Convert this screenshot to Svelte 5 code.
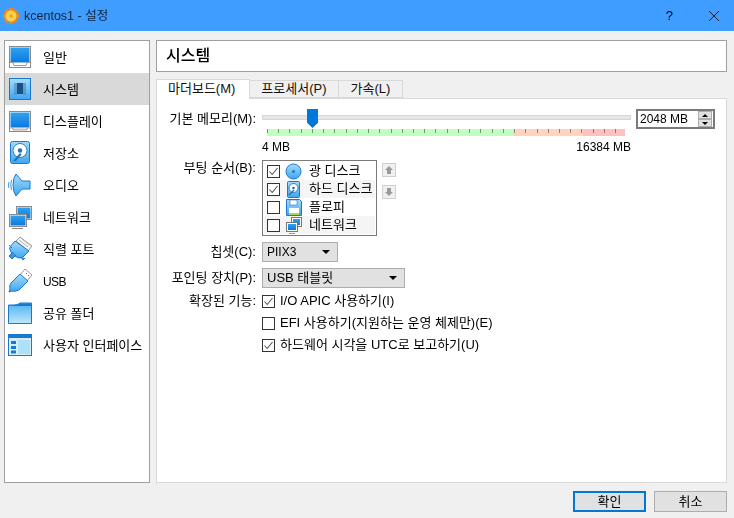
<script>
  const pages = [
    { id: "general", label: "일반" },
    { id: "system", label: "시스템" },
    { id: "display", label: "디스플레이" },
    { id: "storage", label: "저장소" },
    { id: "audio", label: "오디오" },
    { id: "network", label: "네트워크" },
    { id: "serial", label: "직렬 포트" },
    { id: "usb", label: "USB", latin: true },
    { id: "folder", label: "공유 폴더" },
    { id: "ui", label: "사용자 인터페이스" }
  ];
  const tabs = ["마더보드(M)", "프로세서(P)", "가속(L)"];
  const boot = [
    { id: "optical", label: "광 디스크", on: true },
    { id: "hdd", label: "하드 디스크", on: true },
    { id: "floppy", label: "플로피", on: false },
    { id: "net", label: "네트워크", on: false }
  ];
  const features = [
    { label: "I/O APIC 사용하기(I)", on: true },
    { label: "EFI 사용하기(지원하는 운영 체제만)(E)", on: false },
    { label: "하드웨어 시각을 UTC로 보고하기(U)", on: true }
  ];
</script>

{#snippet check(on)}
  <span class="check">
    {#if on}
      <svg width="11" height="11" viewBox="0 0 11 11"><path d="M1.5 5.5 L4.2 8.5 L9.5 2" fill="none" stroke="#555" stroke-width="1.1" /></svg>
    {/if}
  </span>
{/snippet}

{#snippet icon(id)}
  <svg class="icon" width="26" height="26" viewBox="0 0 26 26">
    {#if id === "general"}
      <rect x="1.500" y="2.500" width="21" height="21" fill="#fff" stroke="#8a8a8a" />
      <rect x="2.500" y="3.500" width="19" height="15" fill="url(#blue)" />
      <path d="M2 18.500h3l1 3h12l1-3h3" fill="none" stroke="#999" />
    {:else if id === "system"}
      <rect x="1.500" y="2.500" width="21" height="21" fill="url(#sky)" stroke="#1b78cf" />
      <rect x="9" y="7" width="6" height="11" fill="#1f4f7e" />
      <path d="M6 8h3M6 10h3M6 12h3M6 14h3M6 16h3M6 18h3M15 8h3M15 10h3M15 12h3M15 14h3M15 16h3M15 18h3" stroke="#3f7fb3" />
    {:else if id === "display"}
      <rect x="1.500" y="3.500" width="21" height="20" fill="#fff" stroke="#8a8a8a" />
      <rect x="2.500" y="4.500" width="19" height="15" fill="url(#blue)" />
      <path d="M2 20h3v2h14v-2h3" fill="#ddd" stroke="#aaa" />
    {:else if id === "storage"}
      <rect x="2.500" y="1.500" width="19" height="22" rx="2" fill="url(#sky)" stroke="#1b78cf" />
      <circle cx="12" cy="10.500" r="7" fill="#fff" stroke="#2a7fc9" />
      <circle cx="12" cy="10.500" r="2.200" fill="#2a6fb0" />
      <path d="M5 21l7-8 1.500 1.500L8 21z" fill="#2a6fb0" />
    {:else if id === "audio"}
      <path d="M14 9h8v8h-8l-6 7q-3-4-3-11t3-11z" fill="url(#sky)" stroke="#1b78cf" />
      <path d="M3.500 8q-1.500 5 0 10M1 10q-1 3 0 6" fill="none" stroke="#3a94e0" />
    {:else if id === "network"}
      <rect x="8.500" y="2.500" width="15" height="13" fill="#fff" stroke="#8a8a8a" />
      <rect x="9.500" y="3.500" width="13" height="11" fill="url(#blue)" />
      <rect x="1.500" y="10.500" width="17" height="12" fill="#fff" stroke="#8a8a8a" />
      <rect x="2.500" y="11.500" width="15" height="10" fill="url(#blue)" />
      <path d="M4 24.500h11" stroke="#888" />
    {:else if id === "serial"}
      <path d="M12 1l12 9-4 5L8 5z" fill="#f2f2f2" stroke="#999" />
      <path d="M11 4l9 7M14 3l8 6" stroke="#bbb" />
      <path d="M7 5l14 10-6 6-3 1q-3 0-5-2l-4-4q-2-3-1-5z" fill="url(#sky)" stroke="#1b78cf" />
      <path d="M5 16l-4 4 3 3 4-4M13 21l2 3 2-2M1 9l3 3" fill="#3a94e0" stroke="#1b78cf" />
    {:else if id === "usb"}
      <path d="M17 1l7 6-5 6-7-6z" fill="#fff" stroke="#999" />
      <path d="M18 5l1 1M20 7l1 1" stroke="#666" />
      <path d="M12 6l8 7-9 9q-4 2-7 1l-3 1 1-3q-1-4 1-6z" fill="url(#sky)" stroke="#1b78cf" />
    {:else if id === "folder"}
      <path d="M0.500 6v-1h9l2-2h12v20.500h-23z" fill="url(#folder)" stroke="#1b78cf" />
      <path d="M1 6h23V3.500H12z" fill="#1b78cf" />
    {:else if id === "ui"}
      <rect x="0.500" y="2.500" width="23" height="21" fill="#d3effc" stroke="#1b78cf" />
      <rect x="1" y="3" width="22" height="3" fill="#1b78cf" />
      <rect x="3" y="9" width="5" height="3" fill="#1b78cf" />
      <rect x="3" y="14" width="5" height="3" fill="#1b78cf" />
      <rect x="3" y="18.500" width="5" height="3" fill="#1b78cf" />
      <rect x="10" y="8" width="12" height="14" fill="#aee0f8" />
    {/if}
  </svg>
{/snippet}

{#snippet bootIcon(id)}
  <svg class="boot-icon" width="17" height="17" viewBox="0 0 17 17">
    {#if id === "optical"}
      <circle cx="8.500" cy="8.500" r="7.500" fill="url(#sky)" stroke="#1b78cf" />
      <circle cx="8.500" cy="8.500" r="1.500" fill="#1b78cf" />
    {:else if id === "hdd"}
      <rect x="2.500" y="0.500" width="12" height="16" rx="1" fill="url(#sky)" stroke="#1b78cf" />
      <circle cx="8.500" cy="7" r="4.500" fill="#fff" stroke="#2a7fc9" />
      <circle cx="8.500" cy="7" r="1.300" fill="#2a6fb0" />
      <path d="M4 14l5-5" stroke="#2a6fb0" stroke-width="1.500" />
    {:else if id === "floppy"}
      <path d="M1.500 0.500h13l2 2v14h-15z" fill="url(#sky)" stroke="#1b78cf" />
      <rect x="5" y="1" width="7" height="5" fill="#fff" stroke="#1b78cf" stroke-width="0.600" />
      <rect x="4" y="9" width="10" height="7" fill="#fff" />
      <rect x="4" y="14" width="10" height="2" fill="#a6d84a" />
    {:else}
      <rect x="6.500" y="0.500" width="10" height="9" fill="#fff" stroke="#777" />
      <rect x="8" y="2" width="7" height="6" fill="url(#blue)" />
      <rect x="1.500" y="5.500" width="11" height="9" fill="#fff" stroke="#777" />
      <rect x="3" y="7" width="8" height="6" fill="url(#blue)" />
      <path d="M4 16.500h6" stroke="#999" />
    {/if}
  </svg>
{/snippet}

<svg class="defs" width="0" height="0" aria-hidden="true">
  <defs>
    <linearGradient id="blue" x1="0" y1="0" x2="0" y2="1">
      <stop offset="0" stop-color="#2fa3ee" />
      <stop offset="1" stop-color="#0c78e0" />
    </linearGradient>
    <linearGradient id="sky" x1="0" y1="0" x2="0" y2="1">
      <stop offset="0" stop-color="#a4dcfa" />
      <stop offset="1" stop-color="#3fa6ef" />
    </linearGradient>
    <linearGradient id="folder" x1="0" y1="0" x2="0" y2="1">
      <stop offset="0" stop-color="#4db1ef" />
      <stop offset="1" stop-color="#bfe8fc" />
    </linearGradient>
  </defs>
</svg>

<div class="window">
  <header class="titlebar">
    <svg class="app-icon" width="16" height="16" viewBox="0 0 16 16">
      <path d="M6 0h4v2l2-1 3 3-1 2h2v4h-2l1 2-3 3-2-1v2H6v-2l-2 1-3-3 1-2H0V6h2L1 4l3-3 2 1z" fill="#e98a1f" />
      <circle cx="8" cy="8" r="5.500" fill="#f9d14d" />
      <circle cx="8" cy="8" r="1.800" fill="#f0a030" />
    </svg>
    <span class="title">kcentos1 - 설정</span>
    <span class="help">?</span>
    <svg class="close" width="12" height="12" viewBox="0 0 12 12"><path d="M1 1l10 10M11 1L1 11" stroke="#1a1a1a" fill="none" /></svg>
  </header>

  <div class="body">
    <nav class="sidebar">
      {#each pages as page}
        <div class="nav-row" class:selected={page.id === "system"}>
          {@render icon(page.id)}
          <span class:latin={page.latin}>{page.label}</span>
        </div>
      {/each}
    </nav>

    <main class="content">
      <div class="page-title">시스템</div>

      <div class="tabs">
        {#each tabs as tab, i}
          <div class="tab" class:active={i === 0}>{tab}</div>
        {/each}
      </div>

      <section class="panel">
        <div class="form">
          <div class="label">기본 메모리(M):</div>
          <div class="memory">
            <div class="slider">
              <div class="track"></div>
              <div class="thumb"></div>
              <div class="scale">
                <div class="zone green"></div>
                <div class="zone orange"></div>
                <div class="zone red"></div>
              </div>
              <div class="limits latin"><span>4 MB</span><span>16384 MB</span></div>
            </div>
            <div class="spin">
              <span class="latin">2048 MB</span>
              <div class="spin-btns">
                <div class="spin-btn"><i class="up"></i></div>
                <div class="spin-btn"><i class="down"></i></div>
              </div>
            </div>
          </div>

          <div class="label boot-label">부팅 순서(B):</div>
          <div class="boot">
            <div class="boot-list">
              {#each boot as item}
                <div class="boot-row">
                  {@render check(item.on)}
                  {@render bootIcon(item.id)}
                  <span>{item.label}</span>
                </div>
              {/each}
            </div>
            <div class="arrows">
              <div class="arrow"><svg width="10" height="10" viewBox="0 0 10 10"><path d="M5 1l4 4H7v4H3V5H1z" fill="#9a9a9a" /></svg></div>
              <div class="arrow"><svg width="10" height="10" viewBox="0 0 10 10"><path d="M5 9l4-4H7V1H3v4H1z" fill="#9a9a9a" /></svg></div>
            </div>
          </div>

          <div class="label select-label">칩셋(C):</div>
          <div class="select chipset"><span class="latin">PIIX3</span><i></i></div>

          <div class="label select-label">포인팅 장치(P):</div>
          <div class="select pointing"><span>USB 태블릿</span><i></i></div>

          <div class="label feat-label">확장된 기능:</div>
          <div class="features">
            {#each features as f}
              <div class="feature">
                {@render check(f.on)}
                <span>{f.label}</span>
              </div>
            {/each}
          </div>
        </div>
      </section>
    </main>
  </div>

  <footer class="buttons">
    <button class="default">확인</button>
    <button>취소</button>
  </footer>
</div>

<style>
  :global(body) {
    margin: 0;
    background: #f0f0f0;
    overflow: hidden;
  }
  .defs {
    position: absolute;
  }
  .window {
    width: 734px;
    height: 518px;
    display: flex;
    flex-direction: column;
    background: #f0f0f0;
    color: #000;
    font-family: "Liberation Sans", "Noto Sans CJK KR", sans-serif;
    font-size: 13px;
    line-height: 16px;
  }
  .latin {
    font-size: 12px;
  }
  .titlebar {
    height: 31px;
    flex: none;
    display: flex;
    align-items: center;
    background: #3f9dff;
    padding: 0 14px 0 3px;
    box-sizing: border-box;
  }
  .app-icon {
    margin-right: 5px;
  }
  .title {
    flex: 1;
    color: #10243a;
    font-size: 12.5px;
  }
  .help {
    margin-right: 35px;
    font-size: 13px;
  }
  .body {
    flex: 1;
    display: flex;
    gap: 6px;
    padding: 9px 7px 0 4px;
    min-height: 0;
  }
  .sidebar {
    width: 146px;
    box-sizing: border-box;
    border: 1px solid #a0a0a0;
    background: #fff;
    flex: none;
  }
  .nav-row {
    height: 32px;
    display: flex;
    align-items: center;
    padding-left: 3px;
    gap: 9px;
  }
  .nav-row span {
    padding-top: 1px;
  }
  .nav-row .latin {
    letter-spacing: -0.6px;
  }
  .nav-row.selected {
    background: #d9d9d9;
  }
  .icon {
    flex: none;
  }
  .content {
    flex: 1;
    display: flex;
    flex-direction: column;
    min-width: 0;
  }
  .page-title {
    height: 32px;
    box-sizing: border-box;
    border: 1px solid #a0a0a0;
    background: #fff;
    display: flex;
    align-items: center;
    padding-left: 9px;
    font-size: 16px;
    font-weight: 500;
  }
  .tabs {
    display: flex;
    margin-top: 7px;
    height: 19px;
    align-items: flex-end;
    position: relative;
    z-index: 1;
  }
  .tab {
    height: 18px;
    box-sizing: border-box;
    border: 1px solid #d9d9d9;
    border-left: 0;
    background: #f0f0f0;
    padding: 0 11px 1px;
    display: flex;
    align-items: center;
    color: #111;
  }
  .tab:last-child {
    padding: 0 12px 1px;
  }
  .tab.active {
    height: 20px;
    padding: 0 14px 2px 11px;
    border-left: 1px solid #d9d9d9;
    border-bottom: 0;
    background: #fff;
    margin-bottom: -1px;
  }
  .panel {
    flex: 1;
    border: 1px solid #d9d9d9;
    background: #fff;
    padding: 10px 0 0 10px;
  }
  .form {
    display: grid;
    grid-template-columns: 95px 1fr;
    align-items: start;
  }
  .label {
    text-align: right;
    padding-right: 6px;
    white-space: nowrap;
    height: 20px;
    line-height: 20px;
  }
  .memory {
    display: flex;
    padding-right: 10px;
  }
  .slider {
    width: 369px;
    position: relative;
    padding-top: 6px;
  }
  .track {
    height: 5px;
    box-sizing: border-box;
    background: #e7e7e7;
    border: 1px solid #d6d6d6;
  }
  .thumb {
    position: absolute;
    left: 45px;
    top: 0;
    width: 11px;
    height: 19px;
    background: #0078d7;
    clip-path: polygon(0 0, 100% 0, 100% 72%, 50% 100%, 0 72%);
  }
  .scale {
    display: flex;
    height: 7px;
    margin: 9px 5px 0 5px;
    background-image: repeating-linear-gradient(to right, #9a9a9a 0 1px, transparent 1px 11.23px);
    background-size: 100% 4px;
    background-repeat: no-repeat;
  }
  .zone {
    height: 7px;
    mix-blend-mode: multiply;
  }
  .green {
    width: 246px;
    background: #c0ffc0;
  }
  .orange {
    width: 70px;
    background: #ffd3bd;
  }
  .red {
    width: 42px;
    background: #ffc0c0;
  }
  .limits {
    display: flex;
    justify-content: space-between;
    margin-top: 3px;
    height: 17px;
  }
  .spin {
    margin-left: 5px;
    width: 79px;
    height: 20px;
    box-sizing: border-box;
    border: 2px solid #7a7a7a;
    display: flex;
    align-items: center;
    justify-content: space-between;
    padding-left: 2px;
    background: #fff;
  }
  .spin-btns {
    width: 14px;
    display: flex;
    flex-direction: column;
    margin-right: 1px;
  }
  .spin-btn {
    height: 8px;
    background: #e1e1e1;
    border: 1px solid #adadad;
    box-sizing: border-box;
    display: flex;
    align-items: center;
    justify-content: center;
  }
  .spin-btn i {
    width: 0;
    height: 0;
    border-left: 3px solid transparent;
    border-right: 3px solid transparent;
  }
  .spin-btn .up {
    border-bottom: 3px solid #000;
  }
  .spin-btn .down {
    border-top: 3px solid #000;
  }
  .boot-label {
    margin-top: 2px;
  }
  .boot {
    display: flex;
    gap: 5px;
    margin-top: 4px;
  }
  .boot-list {
    width: 115px;
    height: 76px;
    box-sizing: border-box;
    border: 1px solid #7a7a7a;
    padding: 1px;
  }
  .boot-row {
    height: 18px;
    display: flex;
    align-items: center;
    padding-left: 3px;
    gap: 5px;
  }
  .boot-row:nth-child(even) {
    background: #f5f5f5;
  }
  .boot-row span:last-child {
    margin-left: 2px;
    white-space: nowrap;
  }
  .boot-icon {
    flex: none;
  }
  .check {
    width: 13px;
    height: 13px;
    flex: none;
    box-sizing: border-box;
    border: 1px solid #333;
    background: #fff;
    display: flex;
    align-items: center;
    justify-content: center;
  }
  .arrows {
    display: flex;
    flex-direction: column;
    gap: 8px;
    padding-top: 3px;
  }
  .arrow {
    width: 14px;
    height: 14px;
    box-sizing: border-box;
    border: 1px solid #d0d0d0;
    background: #f0f0f0;
    display: flex;
    align-items: center;
    justify-content: center;
  }
  .select {
    height: 20px;
    box-sizing: border-box;
    background: #e1e1e1;
    border: 1px solid #adadad;
    display: flex;
    align-items: center;
    justify-content: space-between;
    padding: 0 7px 0 4px;
  }
  .select i {
    width: 0;
    height: 0;
    border-left: 4px solid transparent;
    border-right: 4px solid transparent;
    border-top: 4px solid #000;
  }
  .select-label {
    margin-top: 6px;
  }
  .chipset {
    width: 76px;
    margin-top: 6px;
  }
  .pointing {
    width: 143px;
    margin-top: 6px;
  }
  .feat-label {
    margin-top: 3px;
  }
  .features {
    margin-top: 3px;
    display: flex;
    flex-direction: column;
    gap: 2px;
  }
  .feature {
    height: 20px;
    display: flex;
    align-items: center;
    gap: 5px;
    white-space: nowrap;
  }
  .buttons {
    height: 35px;
    flex: none;
    display: flex;
    justify-content: flex-end;
    gap: 8px;
    padding: 8px 7px 0 0;
    box-sizing: border-box;
  }
  button {
    width: 73px;
    height: 21px;
    box-sizing: border-box;
    background: #e1e1e1;
    border: 1px solid #adadad;
    font: inherit;
    padding: 0;
    color: #000;
  }
  button.default {
    border: 2px solid #0078d7;
  }
</style>
